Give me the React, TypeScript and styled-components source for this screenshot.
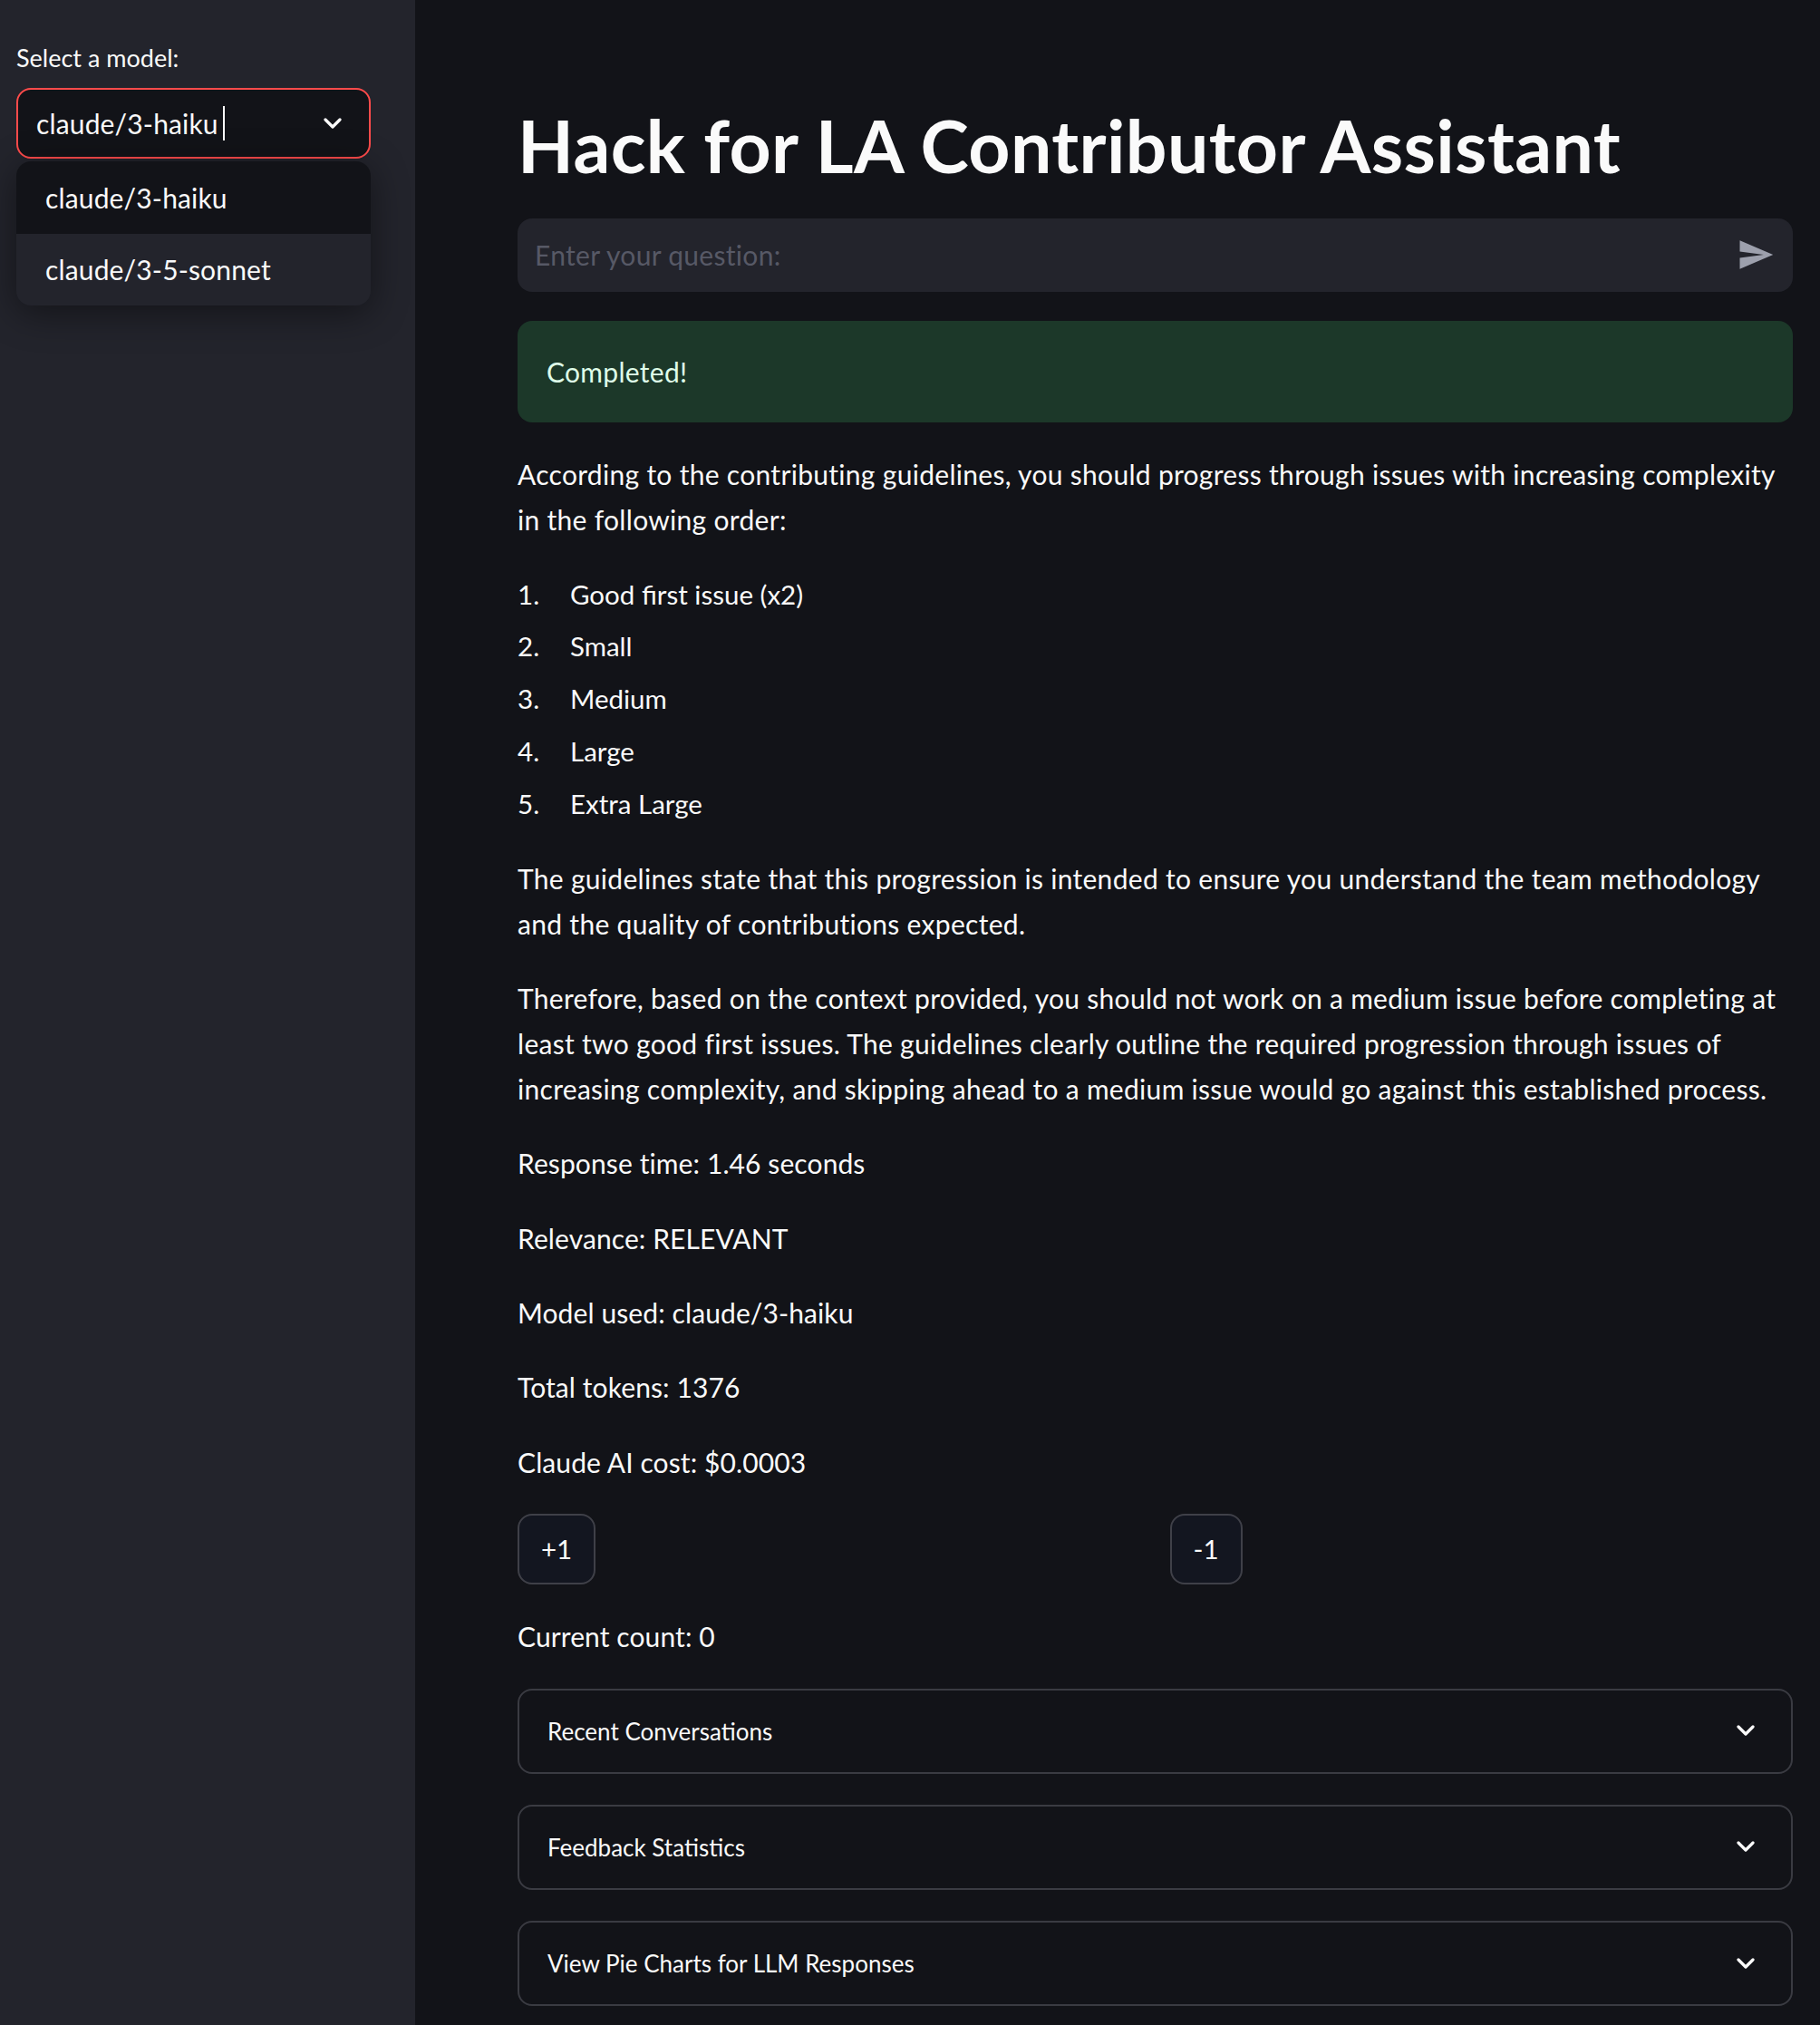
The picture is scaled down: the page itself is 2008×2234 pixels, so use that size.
import * as React from "react";
import styled, { createGlobalStyle } from "styled-components";

const GlobalStyle = createGlobalStyle`
  html, body {
    margin: 0;
    padding: 0;
    background: #121318;
  }
  body {
    font-family: Lato, "Noto Sans", sans-serif;
    color: #fafafa;
  }
`;

const Page = styled.div`
  display: flex;
  min-height: 2234px;
  width: 2008px;
`;

const Sidebar = styled.aside`
  width: 458px;
  flex-shrink: 0;
  background: #23242c;
  box-sizing: border-box;
  padding: 46px 49px 0 18px;
`;

const Label = styled.div`
  font-size: 27px;
  line-height: 36px;
  color: #fafafa;
  margin-bottom: 15px;
`;

const SelectWrap = styled.div`
  position: relative;
`;

const SelectBox = styled.div`
  height: 78px;
  box-sizing: border-box;
  border: 2px solid #ff4b4b;
  border-radius: 16px;
  background: #121318;
  display: flex;
  align-items: center;
  padding: 0 30px 0 20px;
  font-size: 30px;
  letter-spacing: 0.15px;
`;

const Caret = styled.span`
  display: inline-block;
  width: 2px;
  height: 38px;
  background: #fafafa;
  margin-left: 5px;
`;

const Grow = styled.div`
  flex: 1;
  display: flex;
  align-items: center;
`;

const Menu = styled.ul`
  position: absolute;
  top: 81px;
  left: 0;
  right: 0;
  margin: 0;
  padding: 0;
  list-style: none;
  background: #23242c;
  border-radius: 16px;
  overflow: hidden;
  box-shadow: 0 8px 40px rgba(0, 0, 0, 0.45);
`;

const MenuItem = styled.li<{ $active?: boolean }>`
  height: 79.5px;
  display: flex;
  align-items: center;
  padding-left: 32px;
  font-size: 30px;
  letter-spacing: 0.15px;
  background: ${(p) => (p.$active ? "#121318" : "transparent")};
`;

const Main = styled.main`
  flex: 1;
  box-sizing: border-box;
  padding: 112px 30px 0 113px;
  display: flex;
  flex-direction: column;
  gap: 32.3px;
`;

const Title = styled.h1`
  margin: 0;
  font-size: 80.5px;
  line-height: 1.2;
  font-weight: 700;
  letter-spacing: 0.4px;
`;

const QuestionInput = styled.div`
  height: 81px;
  border-radius: 16px;
  background: #23242c;
  display: flex;
  align-items: center;
  justify-content: space-between;
  padding: 0 20px 0 19px;
`;

const Placeholder = styled.span`
  font-size: 30px;
  letter-spacing: 0.3px;
  color: #575966;
`;

const Success = styled.div`
  height: 112px;
  border-radius: 16px;
  background: #1c3829;
  color: #dffde9;
  display: flex;
  align-items: center;
  padding-left: 32px;
  font-size: 30px;
  letter-spacing: 0.3px;
`;

const Para = styled.p`
  margin: 0;
  font-size: 30px;
  letter-spacing: 0.3px;
  line-height: 50px;
`;

const Stat = styled(Para)`
  letter-spacing: 0.1px;
`;

const List = styled.ol`
  margin: 0;
  padding: 0;
  list-style: none;
  display: flex;
  flex-direction: column;
  gap: 7.7px;
`;

const Item = styled.li`
  display: flex;
  font-size: 29.5px;
  line-height: 50px;
`;

const Num = styled.span`
  width: 58px;
`;

const ButtonRow = styled.div`
  display: grid;
  grid-template-columns: 1fr 1fr;
  gap: 32px;
`;

const Button = styled.button`
  justify-self: start;
  height: 78px;
  padding: 0 24px;
  border: 2px solid #3f4048;
  border-radius: 16px;
  background: #131620;
  color: #fafafa;
  font-family: Lato, "Noto Sans", sans-serif;
  font-size: 29.5px;
`;

const Expander = styled.div`
  height: 94px;
  box-sizing: border-box;
  border: 2px solid #3a3b42;
  border-radius: 16px;
  display: flex;
  align-items: center;
  justify-content: space-between;
  padding: 0 40px 0 31px;
  font-size: 26px;

  & + & {
    margin-top: 2px;
  }
`;

const Chevron = () => (
  <svg width="20" height="13" viewBox="0 0 20 13">
    <polyline
      points="2,2 10,10 18,2"
      fill="none"
      stroke="#fafafa"
      strokeWidth="3.2"
      strokeLinecap="round"
      strokeLinejoin="round"
    />
  </svg>
);

const SendIcon = () => (
  <svg width="42" height="42" viewBox="0 0 24 24">
    <path d="M2.01 21L23 12 2.01 3 2 10l15 2-15 2z" fill="#9da0ad" />
  </svg>
);

const items = ["Good first issue (x2)", "Small", "Medium", "Large", "Extra Large"];
const stats = [
  "Response time: 1.46 seconds",
  "Relevance: RELEVANT",
  "Model used: claude/3-haiku",
  "Total tokens: 1376",
  "Claude AI cost: $0.0003",
];
const expanders = ["Recent Conversations", "Feedback Statistics", "View Pie Charts for LLM Responses"];

export default function App() {
  return (
    <>
      <GlobalStyle />
      <Page>
        <Sidebar>
          <Label>Select a model:</Label>
          <SelectWrap>
            <SelectBox>
              <Grow>
                claude/3-haiku
                <Caret />
              </Grow>
              <Chevron />
            </SelectBox>
            <Menu>
              <MenuItem $active>claude/3-haiku</MenuItem>
              <MenuItem>claude/3-5-sonnet</MenuItem>
            </Menu>
          </SelectWrap>
        </Sidebar>
        <Main>
          <Title>Hack for LA Contributor Assistant</Title>
          <QuestionInput>
            <Placeholder>Enter your question:</Placeholder>
            <SendIcon />
          </QuestionInput>
          <Success>Completed!</Success>
          <Para>
            According to the contributing guidelines, you should progress through issues with increasing complexity
            in the following order:
          </Para>
          <List>
            {items.map((t, i) => (
              <Item key={t}>
                <Num>{i + 1}.</Num>
                {t}
              </Item>
            ))}
          </List>
          <Para>
            The guidelines state that this progression is intended to ensure you understand the team methodology and
            the quality of contributions expected.
          </Para>
          <Para>
            Therefore, based on the context provided, you should not work on a medium issue before completing at
            least two good first issues. The guidelines clearly outline the required progression through issues of
            increasing complexity, and skipping ahead to a medium issue would go against this established process.
          </Para>
          {stats.map((s) => (
            <Stat key={s}>{s}</Stat>
          ))}
          <ButtonRow>
            <Button>+1</Button>
            <Button>-1</Button>
          </ButtonRow>
          <Stat>Current count: 0</Stat>
          {expanders.map((e) => (
            <Expander key={e}>
              {e}
              <Chevron />
            </Expander>
          ))}
        </Main>
      </Page>
    </>
  );
}
